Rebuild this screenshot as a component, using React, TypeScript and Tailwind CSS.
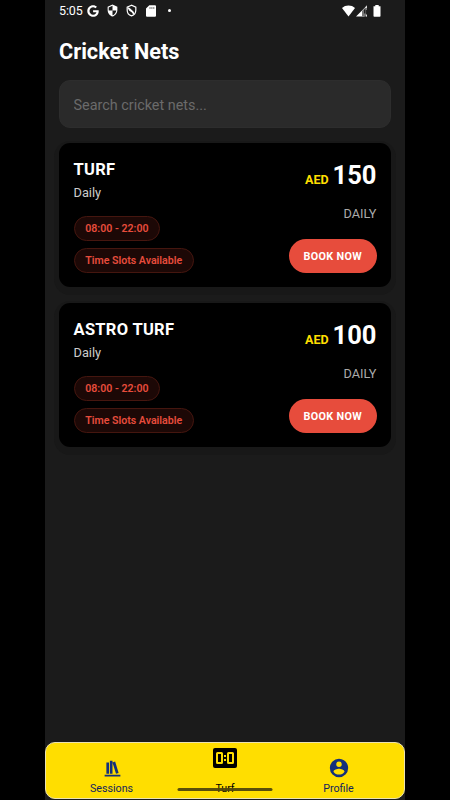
import React, { useState } from "react";
import { FaGoogle } from "react-icons/fa";
import { MdSecurity } from "react-icons/md";

interface Net {
  id: string;
  name: string;
  period: string;
  hours: string;
  price: number;
}

const nets: Net[] = [
  { id: "turf", name: "TURF", period: "Daily", hours: "08:00 - 22:00", price: 150 },
  { id: "astro-turf", name: "ASTRO TURF", period: "Daily", hours: "08:00 - 22:00", price: 100 },
];

function StatusBar() {
  return (
    <div className="flex h-[21px] shrink-0 items-center justify-between pl-[14px] pr-6 text-white">
      <div className="flex items-center">
        <span className="w-[28px] text-[12.500px] leading-5 tracking-[-0.1px]">5:05</span>
        <FaGoogle className="h-[12px] w-[12px]" />
        <MdSecurity className="ml-[7px] h-[13px] w-[13px]" />
        <svg className="ml-[6px] h-[13px] w-[13px]" viewBox="0 0 24 24" fill="none" stroke="currentColor" strokeWidth="2.200">
          <path d="M12 2.200 4 5.700V11c0 5 3.400 9.500 8 10.800 4.600-1.300 8-5.800 8-10.800V5.700L12 2.200Z" />
          <path d="M6 6.500 9 11.500l4 2.500 3.500 4.500" strokeWidth="2.800" />
          <path d="M8 8l8 8" strokeWidth="2.200" />
        </svg>
        <svg className="ml-[8px] h-[12px] w-[10px]" viewBox="0 0 10 12" fill="currentColor">
          <path d="M3.300.300H9a1 1 0 0 1 1 1v9.400a1 1 0 0 1-1 1H1a1 1 0 0 1-1-1V3.500L3.300.300Z" />
          <path d="M4 2v2M5.900 2v2M7.800 2v2" stroke="#555" strokeWidth=".8" />
        </svg>
        <span className="ml-[12px] h-[3px] w-[3px] rounded-full bg-white" />
      </div>

      <div className="flex items-center">
        <svg className="h-[12px] w-[13px]" viewBox="0 0 13 12" fill="currentColor">
          <path d="M0 3C3.500-.3 9.500-.3 13 3L6.500 11.500 0 3Z" />
        </svg>
        <svg className="ml-[1px] h-[12px] w-[12px]" viewBox="0 0 12 12">
          <path d="M0 11.500 11 .5V4.500H8.500v7H0Z" fill="#fff" />
          <path d="M6 6 11 .5v11H6Z" fill="#777" />
          <path d="M8 4.500h1.500v4H8zM10 5h1v4h-1z" fill="#222" />
          <path d="M10 10h1v1.500h-1zM9 2.500l2-2v2.500H9z" fill="#ddd" />
        </svg>
        <svg className="ml-[5px] h-[12px] w-[8px]" viewBox="0 0 8 12" fill="currentColor">
          <path d="M2.300 0h3.400v1.300H7.500V11a.8.8 0 0 1-.8.800H1.300A.8.8 0 0 1 .5 11V1.300h1.800V0Z" />
        </svg>
      </div>
    </div>
  );
}

function NetCard({ net }: { net: Net }) {
  return (
    <div className="flex h-[144px] justify-between rounded-[11px] bg-black px-[14.500px] shadow-[0_3px_0_5px_#181818]">
      <div className="flex flex-col items-start pt-[15px]">
        <h2 className="text-[16.500px] font-bold leading-[23px] tracking-[0.3px] text-white">{net.name}</h2>
        <p className="mt-[3px] text-[12.800px] leading-[18px] text-[#cccccc]">{net.period}</p>
        <span className="mt-[14px] flex h-[25px] items-center rounded-full border border-[#45160f] bg-[#1c0806] px-[10.700px] pt-px text-[10.600px] font-semibold text-[#e74c3c]">
          {net.hours}
        </span>
        <span className="mt-[7px] flex h-[25px] items-center rounded-full border border-[#45160f] bg-[#1c0806] px-[10.700px] pt-px text-[10.600px] font-semibold text-[#e74c3c]">
          Time Slots Available
        </span>
      </div>

      <div className="flex flex-col items-end pt-[15px]">
        <div className="flex items-baseline gap-1 font-bold leading-[34px]">
          <span className="text-[12.500px] text-[#ffde00]">AED</span>
          <span className="text-[25.500px] text-white">{net.price}</span>
        </div>
        <span className="mt-[8px] text-[12.700px] leading-[18px] text-[#aaaaaa]">DAILY</span>
        <button className="mt-[16px] h-[34px] w-[87.500px] rounded-full bg-[#e74c3c] pt-[2px] text-[10.800px] font-bold tracking-[0.35px] text-white">
          BOOK NOW
        </button>
      </div>
    </div>
  );
}

function TabBar() {
  return (
    <nav className="relative mb-px flex h-[57px] shrink-0 rounded-[10px] border border-[#ece2b0] bg-[#ffde00] text-[10.700px] leading-[13px] text-[#12235f]">
      <button className="flex w-[131px] flex-col items-center pt-[15px]">
        <svg className="ml-px h-[21px] w-[21px]" viewBox="0 0 24 24" fill="#14307a">
          <path d="M9 3v15h3V3H9m3 2 4 13 3-1-4-13-3 1M5 5v13h3V5H5M3 19v2h18v-2H3Z" />
        </svg>
        <span className="mt-[3px]">Sessions</span>
      </button>
      <button className="flex flex-1 flex-col items-center pt-[5px] text-black">
        <svg className="h-[20px] w-[24px]" viewBox="0 0 24 20">
          <rect width="24" height="20" rx="2" fill="#000" />
          <g fill="none" stroke="#ffde00" strokeWidth="2">
            <rect x="4" y="5" width="5" height="10" rx=".5" />
            <rect x="15" y="5" width="5" height="10" rx=".5" />
          </g>
          <path d="M11 7h2v2h-2zM11 11h2v2h-2z" fill="#ffde00" />
        </svg>
        <span className="mt-[14px]">Turf</span>
      </button>
      <button className="flex w-[131px] flex-col items-center pt-[14px]">
        <svg className="h-[22px] w-[22px]" viewBox="0 0 24 24" fill="#14307a">
          <path d="M12 19.200c-2.500 0-4.710-1.280-6-3.200.03-2 4-3.100 6-3.100s5.970 1.100 6 3.100c-1.290 1.920-3.500 3.200-6 3.200M12 5a3 3 0 0 1 3 3 3 3 0 0 1-3 3 3 3 0 0 1-3-3 3 3 0 0 1 3-3m0-3A10 10 0 0 0 2 12a10 10 0 0 0 10 10 10 10 0 0 0 10-10c0-5.530-4.500-10-10-10Z" />
        </svg>
        <span className="mt-[3px]">Profile</span>
      </button>

      {/* Gesture handle sits over the tabs */}
      <div className="absolute bottom-[7px] left-1/2 h-[3px] w-[95px] -translate-x-1/2 rounded-full bg-[#51470a]/95" />
    </nav>
  );
}

export default function App() {
  const [query, setQuery] = useState("");
  const visible = nets.filter((n) => n.name.toLowerCase().includes(query.toLowerCase()));

  return (
    <div className="flex h-screen justify-center overflow-hidden bg-black font-['Roboto',sans-serif]">
      <div className="flex w-[360px] flex-col bg-[#1b1b1b]">
        <StatusBar />

        <main className="flex flex-1 flex-col px-[14px]">
          <h1 className="mt-[16px] text-[21.700px] font-bold leading-[30px] text-white">Cricket Nets</h1>

          <input
            type="text"
            value={query}
            onChange={(e) => setQuery(e.target.value)}
            placeholder="Search cricket nets..."
            className="mt-[13px] h-[48px] w-full rounded-[11px] border border-[#2d2d2d] bg-[#2a2a2a] px-[13.500px] pt-[2px] text-[14.400px] text-white placeholder-[#6b6b6b] focus:outline-none"
          />

          <div className="mt-[15px] flex flex-col gap-4">
            {visible.map((net) => (
              <NetCard key={net.id} net={net} />
            ))}
          </div>
        </main>

        <TabBar />
      </div>
    </div>
  );
}
